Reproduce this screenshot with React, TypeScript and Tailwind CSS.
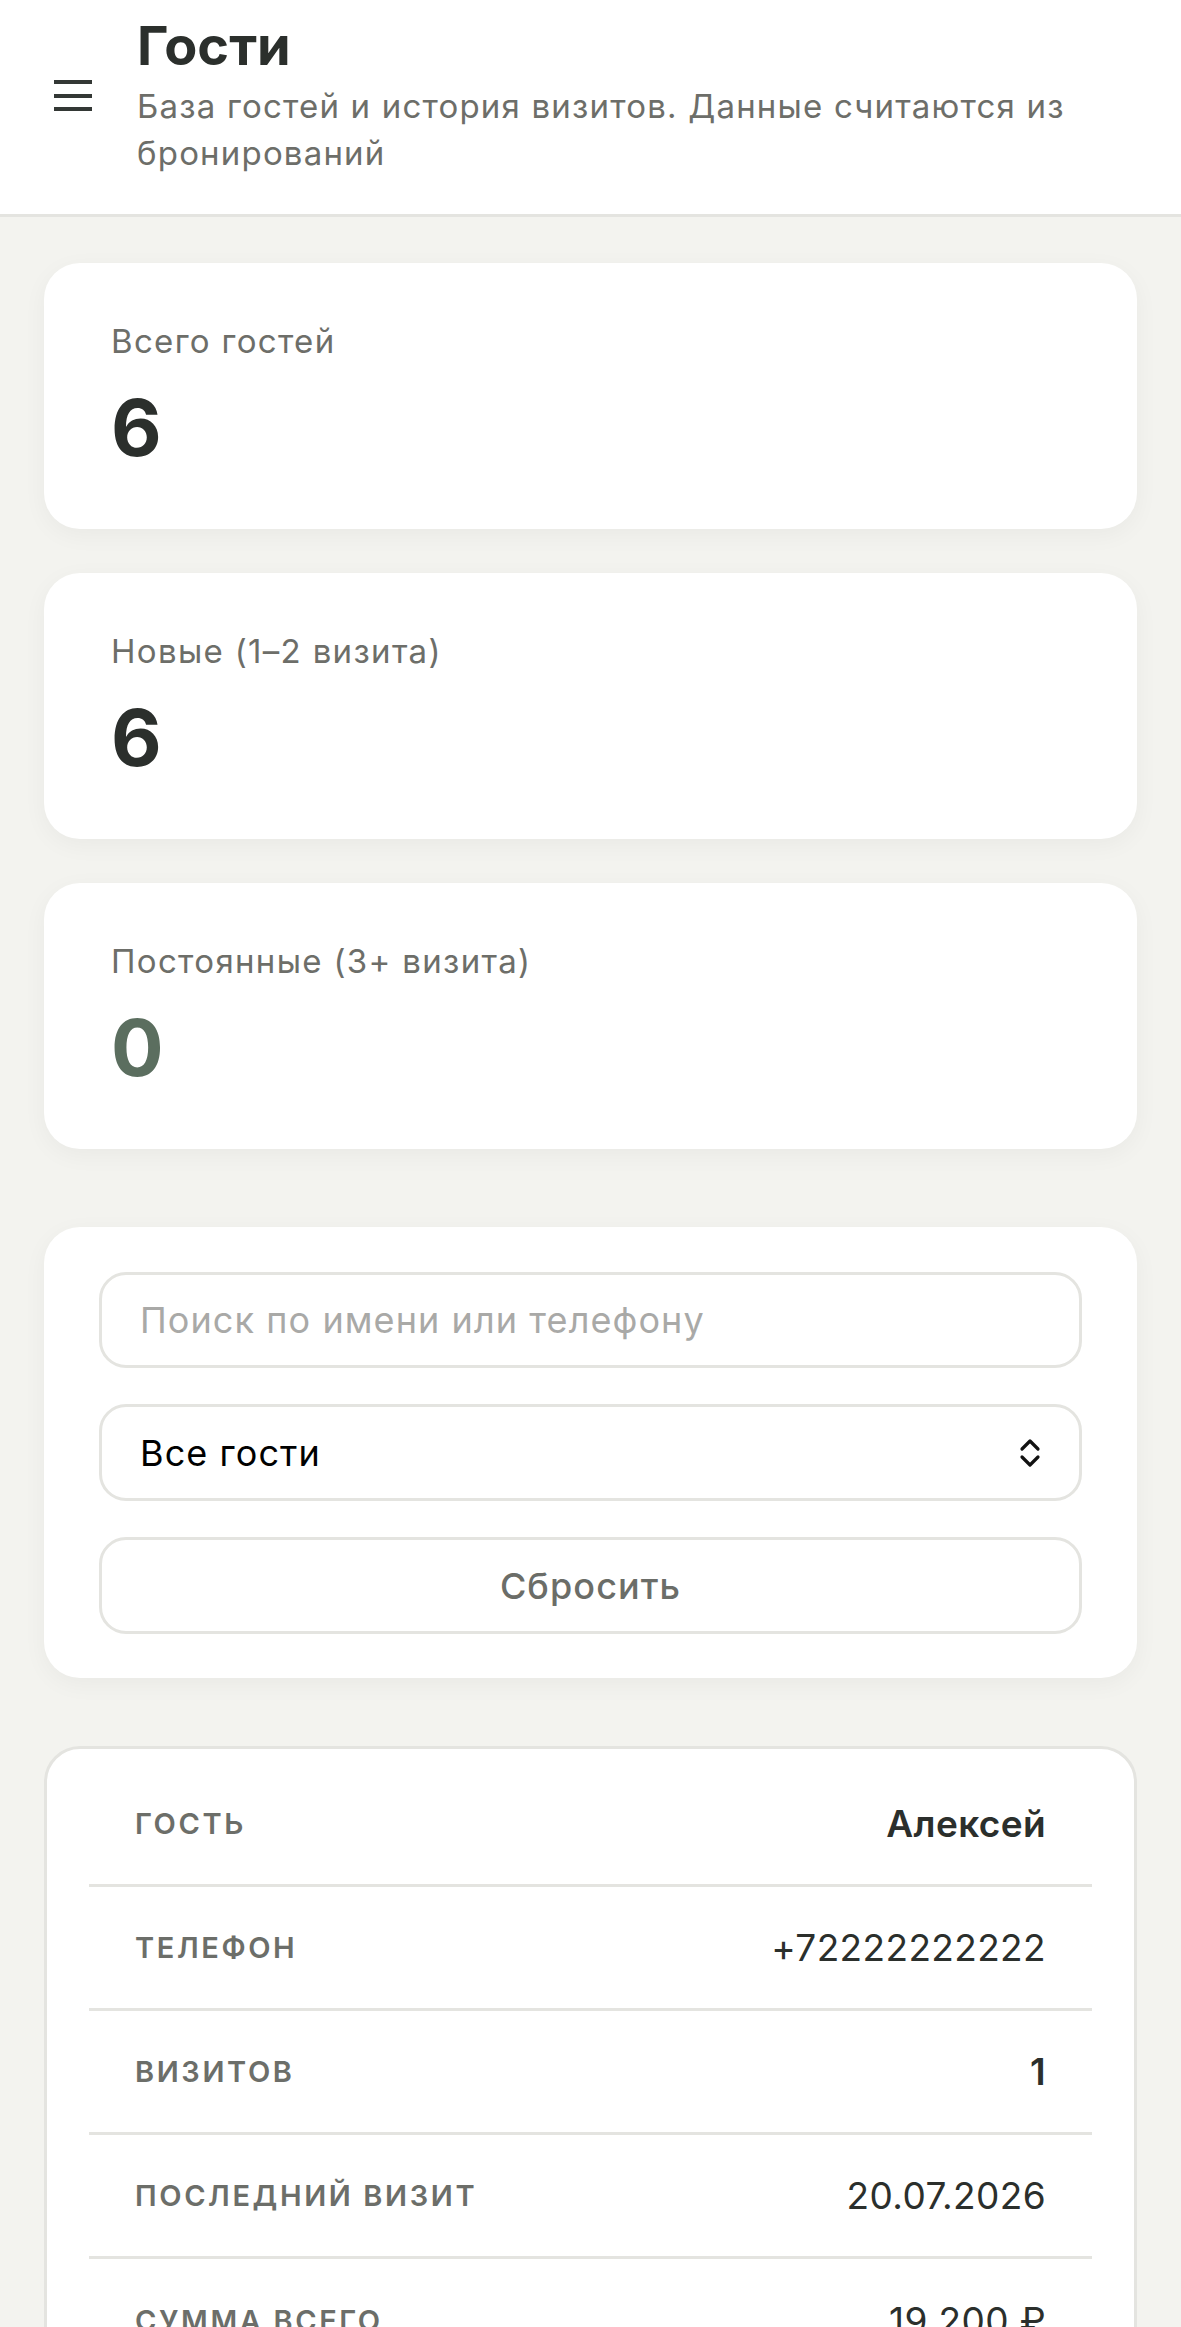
import React from 'react';

const stats = [
  { label: 'Всего гостей', value: '6', color: 'text-[#2b2f2c]' },
  { label: 'Новые (1–2 визита)', value: '6', color: 'text-[#2b2f2c]' },
  { label: 'Постоянные (3+ визита)', value: '0', color: 'text-[#5b6e5f]' },
];

const rows = [
  { label: 'Гость', value: 'Алексей', strong: true },
  { label: 'Телефон', value: '+72222222222', strong: false },
  { label: 'Визитов', value: '1', strong: true },
  { label: 'Последний визит', value: '20.07.2026', strong: false },
  { label: 'Сумма всего', value: '19 200 ₽', strong: false },
];

const App: React.FC = () => {
  return (
    <div className="min-h-screen bg-[#f3f3ef] font-['Inter','Noto_Sans',sans-serif]">
      {/* header */}
      <header className="flex items-center bg-white border-b-[3px] border-[#e4e4e0] pl-[54px] pr-[40px] pt-[14px] pb-[37px]">
        <button className="flex flex-col gap-[9.5px] w-[38px] shrink-0">
          <span className="block h-[4px] w-full bg-[#333835]" />
          <span className="block h-[4px] w-full bg-[#333835]" />
          <span className="block h-[4px] w-full bg-[#333835]" />
        </button>
        <div className="ml-[45px]">
          <h1 className="text-[54px] leading-[64px] font-bold text-[#2b2f2c]">Гости</h1>
          <p className="mt-[5px] text-[33px] leading-[47px] tracking-[0.036em] text-[#6d6e69]">
            База гостей и история визитов. Данные считаются из бронирований
          </p>
        </div>
      </header>

      <main className="px-[44px] pt-[46px] pb-[80px]">
        {/* stat cards */}
        <div className="flex flex-col gap-[44px]">
          {stats.map((s) => (
            <div
              key={s.label}
              className="bg-white rounded-[36px] shadow-[0_6px_24px_rgba(0,0,0,0.045)] pl-[67px] pt-[56px] pb-[62px]"
            >
              <div className="text-[33px] leading-[44px] tracking-[0.04em] text-[#6d6e69]">{s.label}</div>
              <div className={`mt-[26px] text-[78px] leading-[78px] font-bold ${s.color}`}>{s.value}</div>
            </div>
          ))}
        </div>

        {/* filters */}
        <div className="mt-[78px] bg-white rounded-[36px] shadow-[0_6px_24px_rgba(0,0,0,0.045)] px-[55px] pt-[45px] pb-[44px] flex flex-col gap-[36px]">
          <input
            className="h-[96px] w-full rounded-[27px] border-[3px] border-[#e4e4e0] px-[38px] text-[36px] tracking-[0.03em] text-black placeholder:text-[#a9a9a7] outline-none"
            placeholder="Поиск по имени или телефону"
          />
          <div className="h-[97px] w-full rounded-[27px] border-[3px] border-[#e4e4e0] pl-[38px] pr-[38px] flex items-center justify-between">
            <span className="text-[36px] tracking-[0.03em] text-black">Все гости</span>
            <svg width="22" height="32" viewBox="0 0 22 32" fill="none" stroke="#111" strokeWidth="3.2" strokeLinecap="round" strokeLinejoin="round">
              <path d="M3 12 L11 4 L19 12" />
              <path d="M3 20 L11 28 L19 20" />
            </svg>
          </div>
          <button className="h-[97px] w-full rounded-[27px] border-[3px] border-[#e4e4e0] text-[36px] tracking-[0.03em] font-medium text-[#6b6d68]">
            Сбросить
          </button>
        </div>

        {/* guest table */}
        <div className="mt-[68px] bg-white rounded-[36px] border-[3px] border-[#e4e4e0] px-[42px] pt-[14px] pb-[14px]">
          {rows.map((r, i) => (
            <div
              key={r.label}
              className={`flex items-center justify-between h-[124px] px-[46px] ${i < rows.length - 1 ? 'border-b-[3px] border-[#e4e4e0]' : ''}`}
            >
              <span className="text-[29px] font-semibold uppercase tracking-[0.09em] text-[#6c6e69]">{r.label}</span>
              <span className={`text-[37px] tracking-[0.01em] text-[#2b2f2c] ${r.strong ? 'font-semibold' : 'font-normal'}`}>{r.value}</span>
            </div>
          ))}
        </div>
      </main>
    </div>
  );
};

export default App;
